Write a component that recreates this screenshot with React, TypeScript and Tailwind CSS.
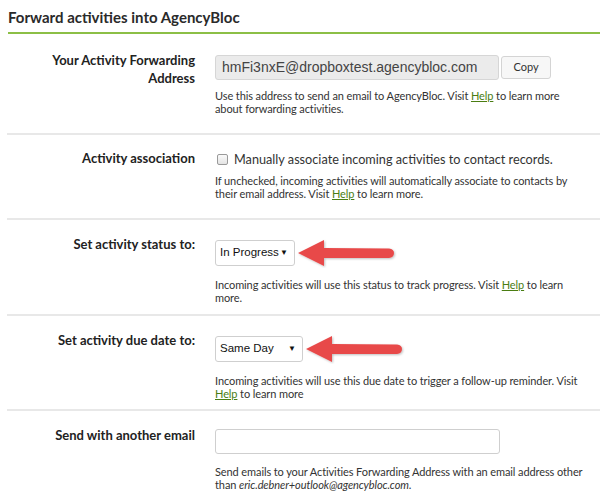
import React from "react";

const FONT = { fontFamily: "Lato, 'Noto Sans', sans-serif" };
const ARIAL = { fontFamily: "'Liberation Sans', Arial, sans-serif" };

function Arrow() {
  return (
    <svg width="104" height="30" viewBox="0 0 104 30" className="shrink-0 ml-[2px]">
      <defs>
        <filter id="sh" x="-10%" y="-30%" width="120%" height="160%">
          <feDropShadow dx="1" dy="1" stdDeviation="1" floodColor="#000" floodOpacity="0.25" />
        </filter>
      </defs>
      <g filter="url(#sh)" fill="#e84a4a">
        <path d="M1 15 L27 2 L27 10 L92 10.5 Q97 11 97 15 Q97 19.5 92 20 L27 20 L27 28 Z" />
      </g>
    </svg>
  );
}

function Help() {
  return <a className="text-[#4a7d12] underline">Help</a>;
}

function Row({
  label,
  children,
  className,
  last,
}: {
  label: React.ReactNode;
  children: React.ReactNode;
  className?: string;
  last?: boolean;
}) {
  return (
    <div
      className={
        "flex ml-[7px] " + (last ? "" : "border-b-2 border-[#e8e8e8] ") + (className ?? "")
      }
    >
      <div className="w-[188px] shrink-0 text-right text-[13px] font-bold text-[#222] leading-[18px]">
        {label}
      </div>
      <div className="pl-[20px] flex-1">{children}</div>
    </div>
  );
}

function Hint({ children }: { children: React.ReactNode }) {
  return (
    <p className="text-[11px] leading-[13px] tracking-[-0.1px] text-[#333] pr-3">{children}</p>
  );
}

function Select({ value, width }: { value: string; width: string }) {
  return (
    <div
      className={
        width +
        " h-[26px] border border-[#cfcfcf] rounded-[3px] flex items-center justify-between pl-[4px] pr-[6px] text-[11.5px] text-[#111] whitespace-nowrap"
      }
      style={ARIAL}
    >
      <span>{value}</span>
      <span className="text-[8px]">▼</span>
    </div>
  );
}

export default function App() {
  return (
    <div className="w-[600px] h-[501px] bg-white overflow-hidden" style={FONT}>
      <div className="px-[8px] pt-[7px]">
        <h1 className="text-[15px] font-bold text-[#2a2a2a] leading-[20px]">
          Forward activities into AgencyBloc
        </h1>
      </div>
      <div className="ml-[8px] mt-[5px] h-[2px] bg-[#8cbf46]" />

      <Row label={<>Your Activity Forwarding<br />Address</>} className="pt-[17px] pb-[16px] h-[101px]">
        <div className="flex items-center mt-[4px]">
          <div
            className="w-[284px] h-[25px] bg-[#ebebeb] border border-[#d6d6d6] rounded-[3px] px-[6px] flex items-center text-[14px] text-[#444]"
            style={ARIAL}
          >
            hmFi3nxE@dropboxtest.agencybloc.com
          </div>
          <button className="ml-[2px] w-[50px] h-[23px] bg-[#f7f7f7] border border-[#d4d4d4] rounded-[3px] text-[11px] text-[#333]">
            Copy
          </button>
        </div>
        <div className="mt-[9px]">
          <Hint>
            Use this address to send an email to AgencyBloc. Visit <Help /> to learn more about
            forwarding activities.
          </Hint>
        </div>
      </Row>

      <Row label="Activity association" className="pt-[14px] h-[85px]">
        <label className="flex items-center gap-[6px] text-[12.7px] text-[#333] leading-[20px] mt-[0px]">
          <span className="w-[11px] h-[11px] ml-[2px] border border-[#9a9a9a] rounded-[2px] bg-gradient-to-b from-[#fafafa] to-[#e4e4e4]" />
          Manually associate incoming activities to contact records.
        </label>
        <div className="mt-[5px]">
          <Hint>
            If unchecked, incoming activities will automatically associate to contacts by their
            email address. Visit <Help /> to learn more.
          </Hint>
        </div>
      </Row>

      <Row label="Set activity status to:" className="pt-[15px] h-[96px]">
        <div className="flex items-center mt-[3px]">
          <Select value="In Progress" width="w-[80px]" />
          <Arrow />
        </div>
        <div className="mt-[10px]">
          <Hint>
            Incoming activities will use this status to track progress. Visit <Help /> to learn
            more.
          </Hint>
        </div>
      </Row>

      <Row label="Set activity due date to:" className="pt-[15px] h-[95px]">
        <div className="flex items-center mt-[3px]">
          <Select value="Same Day" width="w-[88px]" />
          <Arrow />
        </div>
        <div className="mt-[10px]">
          <Hint>
            Incoming activities will use this due date to trigger a follow-up reminder. Visit{" "}
            <Help /> to learn more
          </Hint>
        </div>
      </Row>

      <Row label="Send with another email" className="pt-[15px]" last>
        <div className="mt-[3px] w-[285px] h-[25px] border border-[#cfcfcf] rounded-[3px]" />
        <div className="mt-[11px]">
          <Hint>
            Send emails to your Activities Forwarding Address with an email address other than{" "}
            <em>eric.debner+outlook@agencybloc.com</em>.
          </Hint>
        </div>
      </Row>
    </div>
  );
}
